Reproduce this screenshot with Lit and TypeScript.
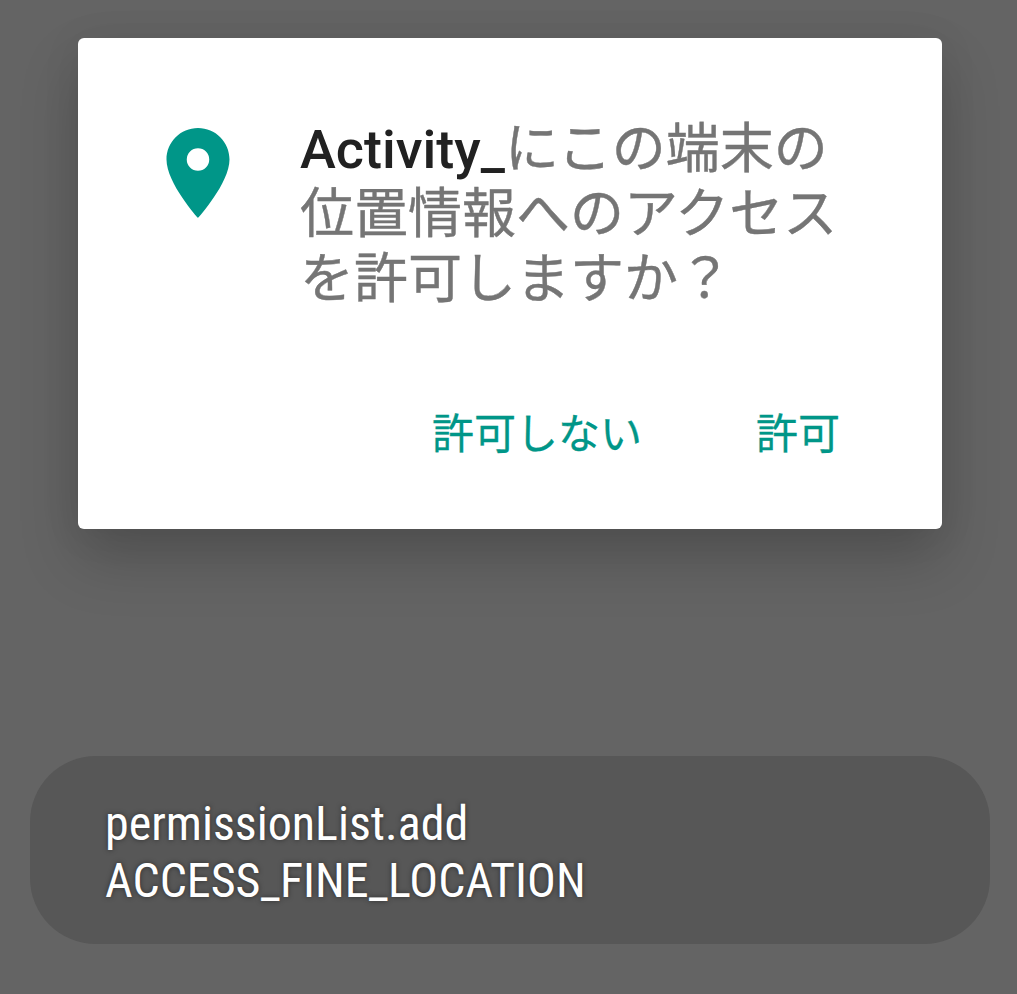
import { css, html, LitElement } from "lit";
import { customElement, property } from "lit/decorators.js";

@customElement("permission-dialog")
export class PermissionDialog extends LitElement {
	static override styles = css`
		:host {
			display: block;
			box-sizing: border-box;
			width: 864px;
			height: 491px;
			padding: 79px 72px 0 72px;
			border-radius: 6px;
			background-color: #ffffff;
			box-shadow: 0 30px 60px rgba(0, 0, 0, 0.19), 0 4px 40px rgba(0, 0, 0, 0.07);
		}

		.content {
			display: flex;
			align-items: flex-start;
		}

		.icon {
			flex: none;
			width: 108px;
			height: 108px;
			margin: 2px 0 0 -6px;
			color: #009688;
		}

		.message {
			margin: 0 0 0 48px;
			font-size: 54px;
			line-height: 65px;
			color: #757575;
			white-space: nowrap;
			-webkit-text-stroke: 0.4px #757575;
		}

		.app-name {
			font-weight: 500;
			color: #212121;
			-webkit-text-stroke: 0;
		}

		.actions {
			display: flex;
			justify-content: flex-end;
			gap: 114px;
			margin: 95px 30px 0 0;
		}

		button {
			padding: 0;
			border: none;
			background: none;
			font-family: inherit;
			font-size: 42px;
			font-weight: 400;
			line-height: 56px;
			color: #009688;
			-webkit-text-stroke: 0.3px #009688;
			cursor: pointer;
		}
	`;

	@property({ type: String })
	app = "";

	private respond(granted: boolean) {
		this.dispatchEvent(
			new CustomEvent("permission-result", {
				detail: { granted },
				bubbles: true,
				composed: true,
			}),
		);
	}

	override render() {
		return html`
			<div class="content">
				<svg class="icon" viewBox="0 0 24 24" fill="currentColor">
					<path
						d="M12 2C8.13 2 5 5.13 5 9c0 5.25 7 13 7 13s7-7.75 7-13c0-3.87-3.13-7-7-7zm0 9.5a2.5 2.5 0 0 1 0-5 2.5 2.5 0 0 1 0 5z"
					/>
				</svg>
				<p class="message"><span class="app-name">${this.app}</span>にこの端末の<br />位置情報へのアクセス<br />を許可しますか？</p>
			</div>
			<div class="actions">
				<button @click=${() => this.respond(false)}>許可しない</button>
				<button @click=${() => this.respond(true)}>許可</button>
			</div>
		`;
	}
}

@customElement("toast-message")
export class ToastMessage extends LitElement {
	static override styles = css`
		:host {
			display: block;
			box-sizing: border-box;
			width: 960px;
			height: 188px;
			padding: 39px 75px;
			border-radius: 66px;
			background-color: #575757;
		}

		.text {
			margin: 0;
			font-family: "Roboto Condensed", Roboto, sans-serif;
			font-stretch: 75%;
			font-size: 48px;
			line-height: 57px;
			color: #ffffff;
			text-shadow: 0 0 5px rgba(0, 0, 0, 0.5);
			white-space: pre-line;
		}
	`;

	@property({ type: String })
	message = "";

	override render() {
		return html`<p class="text">${this.message}</p>`;
	}
}

@customElement("app-root")
export class AppRoot extends LitElement {
	static override styles = css`
		:host {
			display: flex;
			flex-direction: column;
			box-sizing: border-box;
			width: 100%;
			height: 100vh;
			padding: 38px 27px 50px 30px;
			overflow: hidden;
			background-color: #646464;
			font-family: Roboto, "Noto Sans CJK JP", sans-serif;
		}

		permission-dialog {
			margin-left: 48px;
		}

		toast-message {
			margin-top: auto;
		}
	`;

	override render() {
		return html`
			<permission-dialog app="Activity_"></permission-dialog>
			<toast-message
				.message=${"permissionList.add\nACCESS_FINE_LOCATION"}
			></toast-message>
		`;
	}
}

declare global {
	interface HTMLElementTagNameMap {
		"app-root": AppRoot;
		"permission-dialog": PermissionDialog;
		"toast-message": ToastMessage;
	}
}
